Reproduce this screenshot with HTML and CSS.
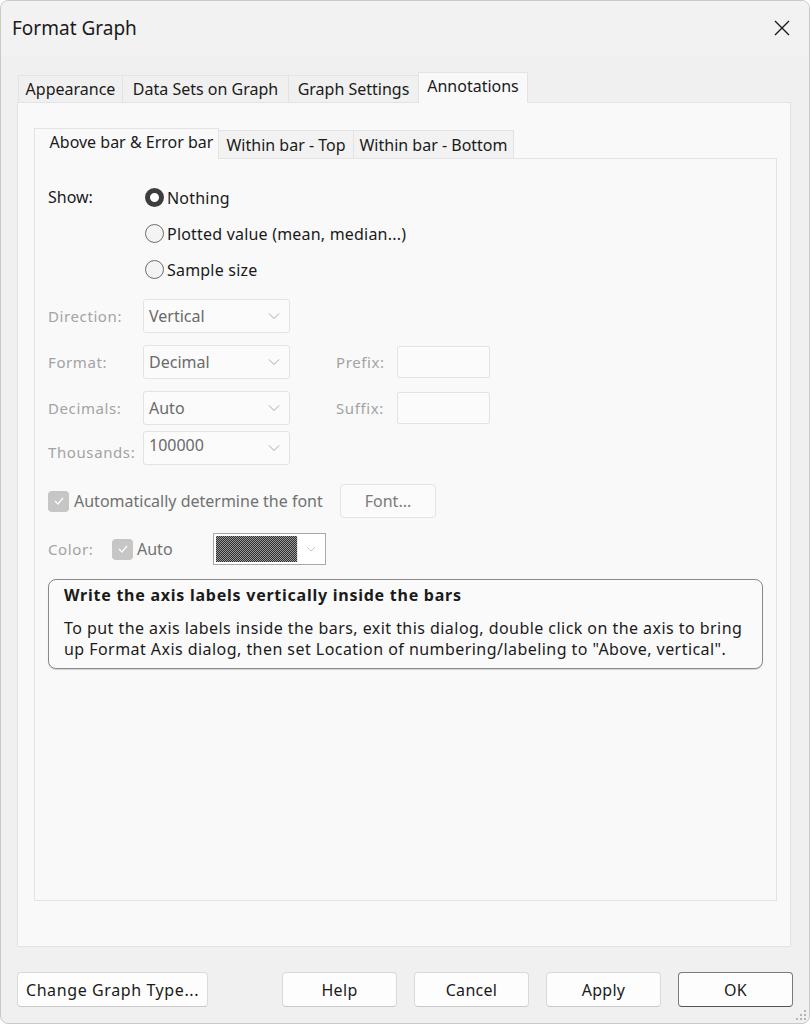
FILE: index.html
```html
<!DOCTYPE html>
<html>
<head>
<meta charset="utf-8">
<link rel="stylesheet" href="styles.css">
</head>
<body>
<div class="window">
  <div class="titlebar">
    <span class="title">Format Graph</span>
    <svg class="close" width="18" height="18" viewBox="0 0 18 18"><path d="M2 2L16 16M16 2L2 16" stroke="#1a1a1a" stroke-width="1.4" fill="none"/></svg>
  </div>

  <div class="tabs outer-tabs">
    <div class="tab t-app">Appearance</div>
    <div class="tab t-data">Data Sets on Graph</div>
    <div class="tab t-set">Graph Settings</div>
    <div class="tab active t-ann">Annotations</div>
  </div>

  <div class="outer-panel">
    <div class="tabs inner-tabs">
      <div class="tab active t-above">Above bar &amp; Error bar</div>
      <div class="tab t-top">Within bar - Top</div>
      <div class="tab t-bottom">Within bar - Bottom</div>
    </div>
    <div class="inner-panel">
      <div class="show-row">
        <div class="show-label">Show:</div>
        <div class="radios">
          <label class="radio"><span class="dot checked"></span>Nothing</label>
          <label class="radio"><span class="dot"></span>Plotted value (mean, median...)</label>
          <label class="radio"><span class="dot"></span>Sample size</label>
        </div>
      </div>

      <div class="fields">
        <div class="field-row">
          <span class="dlabel">Direction:</span>
          <div class="select"><span>Vertical</span><svg class="chev" width="12" height="8" viewBox="0 0 12 8"><path d="M1 1.5L6 6.5L11 1.5" stroke="#a8a8a8" fill="none" stroke-width="1"/></svg></div>
        </div>
        <div class="field-row">
          <span class="dlabel">Format:</span>
          <div class="select"><span>Decimal</span><svg class="chev" width="12" height="8" viewBox="0 0 12 8"><path d="M1 1.5L6 6.5L11 1.5" stroke="#a8a8a8" fill="none" stroke-width="1"/></svg></div>
          <span class="dlabel side">Prefix:</span>
          <div class="textbox"></div>
        </div>
        <div class="field-row">
          <span class="dlabel">Decimals:</span>
          <div class="select"><span>Auto</span><svg class="chev" width="12" height="8" viewBox="0 0 12 8"><path d="M1 1.5L6 6.5L11 1.5" stroke="#a8a8a8" fill="none" stroke-width="1"/></svg></div>
          <span class="dlabel side">Suffix:</span>
          <div class="textbox"></div>
        </div>
        <div class="field-row thousands">
          <span class="dlabel">Thousands:</span>
          <div class="select"><span class="up">100000</span><svg class="chev" width="12" height="8" viewBox="0 0 12 8"><path d="M1 1.5L6 6.5L11 1.5" stroke="#a8a8a8" fill="none" stroke-width="1"/></svg></div>
        </div>
      </div>

      <div class="font-row">
        <span class="check"><svg width="12" height="10" viewBox="0 0 12 10"><path d="M2 5L5 8L10 2" stroke="#fff" stroke-width="1.2" fill="none"/></svg></span>
        <span class="gtext">Automatically determine the font</span>
        <div class="btn-disabled">Font...</div>
      </div>

      <div class="color-row">
        <span class="dlabel">Color:</span>
        <span class="check"><svg width="12" height="10" viewBox="0 0 12 10"><path d="M2 5L5 8L10 2" stroke="#fff" stroke-width="1.2" fill="none"/></svg></span>
        <span class="gtext auto">Auto</span>
        <div class="swatch">
          <div class="pattern"></div>
          <div class="swatch-drop"><svg width="10" height="6" viewBox="0 0 10 6"><path d="M1 1L5 5L9 1" stroke="#c8c8c8" fill="none" stroke-width="1"/></svg></div>
        </div>
      </div>

      <div class="info">
        <div class="info-title">Write the axis labels vertically inside the bars</div>
        <div class="info-body">To put the axis labels inside the bars, exit this dialog, double click on the axis to bring<br>up Format Axis dialog, then set Location of numbering/labeling to "Above, vertical".</div>
      </div>
    </div>
  </div>

  <div class="footer">
    <div class="btn wide">Change Graph Type...</div>
    <div class="spacer"></div>
    <div class="btn">Help</div>
    <div class="btn">Cancel</div>
    <div class="btn">Apply</div>
    <div class="btn default">OK</div>
  </div>
  <svg class="grip" width="12" height="12" viewBox="0 0 12 12">
    <rect x="9" y="1" width="2" height="2" fill="#b5b5b5"/>
    <rect x="5" y="5" width="2" height="2" fill="#b5b5b5"/>
    <rect x="9" y="5" width="2" height="2" fill="#b5b5b5"/>
    <rect x="1" y="9" width="2" height="2" fill="#b5b5b5"/>
    <rect x="5" y="9" width="2" height="2" fill="#b5b5b5"/>
    <rect x="9" y="9" width="2" height="2" fill="#b5b5b5"/>
  </svg>
</div>
</body>
</html>
```

FILE: styles.css
```css
* { box-sizing: border-box; }
html, body { margin: 0; padding: 0; background: #ffffff; }
body {
  font-family: "Noto Sans", "Open Sans", sans-serif;
  font-size: 16px;
  color: #1a1a1a;
}
.window {
  position: relative;
  width: 810px;
  height: 1024px;
  background: #f0f0f0;
  border: 1px solid #c9c9c9;
  border-radius: 8px;
  display: flex;
  flex-direction: column;
  overflow: hidden;
}
.titlebar {
  height: 56px;
  display: flex;
  align-items: center;
  justify-content: space-between;
  padding: 0 18px 0 11px;
  background: #f2f2f2;
}
.title {
  font-size: 19px;
  margin-top: -2px;
}
.close { margin-top: -2px; }

.tabs {
  display: flex;
  align-items: flex-end;
}
.outer-tabs {
  height: 45px;
  padding-left: 17px;
}
.tab {
  height: 27px;
  border: 1px solid #e3e3e3;
  border-bottom: none;
  background: #f0f0f0;
  display: flex;
  align-items: center;
  justify-content: center;
  white-space: nowrap;
  margin-right: -1px;
}
.tab.active {
  height: 31px;
  background: #f9f9f9;
  position: relative;
  z-index: 1;
  margin-bottom: -1px;
  padding-bottom: 4px;
}
.t-app { width: 105px; }
.t-data { width: 167px; }
.t-set { width: 131px; }
.t-ann { width: 110px; }

.outer-panel {
  margin: 0 18px 0 16px;
  height: 845px;
  background: #f9f9f9;
  border: 1px solid #e3e3e3;
  padding: 24px 13px 0 16px;
  display: flex;
  flex-direction: column;
}
.inner-tabs {
  height: 31px;
}
.inner-tabs .tab { height: 28px; background: #f2f2f2; }
.inner-tabs .tab.active { height: 31px; background: #f9f9f9; padding: 0 0 4px 10px; }
.t-above { width: 185px; }
.t-top { width: 136px; }
.t-bottom { width: 161px; }

.inner-panel {
  height: 743px;
  border: 1px solid #e3e3e3;
  background: #f9f9f9;
  padding: 26px 14px 0 13px;
}

.show-row {
  display: flex;
}
.show-label { width: 97px; padding-top: 1px; }
.radios { display: flex; flex-direction: column; gap: 11px; }
.radio {
  display: flex;
  align-items: center;
  height: 25px;
  letter-spacing: 0.2px;
}
.dot {
  width: 19px;
  height: 19px;
  border-radius: 50%;
  border: 1px solid #6b6b6b;
  background: #f4f4f4;
  margin-right: 3px;
  flex: none;
}
.dot.checked {
  border: 5.5px solid #3d3d3d;
  background: #fff;
}

.fields {
  margin-top: 17px;
  display: flex;
  flex-direction: column;
  gap: 12px;
}
.field-row {
  display: flex;
  align-items: center;
  height: 34px;
}
.thousands { margin-top: -6px; }
.dlabel {
  color: #a3a3a3;
  font-size: 15px;
  letter-spacing: 0.6px;
  width: 95px;
  flex: none;
}
.thousands .dlabel { padding-top: 8px; }
.dlabel.side { width: 61px; margin-left: 46px; }
.select {
  width: 147px;
  height: 34px;
  border: 1px solid #e3e3e3;
  border-radius: 3px;
  background: #fbfbfb;
  display: flex;
  align-items: center;
  justify-content: space-between;
  padding: 0 9px 0 5px;
  color: #6a6a6a;
}
.select .up { margin-top: -6px; }
.textbox {
  width: 93px;
  height: 32px;
  border: 1px solid #e3e3e3;
  border-radius: 2px;
  background: #fbfbfb;
}

.font-row {
  display: flex;
  align-items: center;
  margin-top: 19px;
  height: 34px;
}
.check {
  width: 21px;
  height: 21px;
  border-radius: 4px;
  background: #c6c6c6;
  display: flex;
  align-items: center;
  justify-content: center;
  flex: none;
}
.gtext { color: #717171; margin-left: 5px; }
.font-row .gtext { width: 251px; }
.btn-disabled {
  margin-left: 15px;
  width: 96px;
  height: 34px;
  border: 1px solid #e3e3e3;
  border-radius: 4px;
  background: #fbfbfb;
  color: #7a7a7a;
  display: flex;
  align-items: center;
  justify-content: center;
}
.color-row {
  display: flex;
  align-items: center;
  margin-top: 15px;
  height: 32px;
}
.color-row .dlabel { width: 64px; }
.gtext.auto { margin-left: 4px; width: 76px; }
.swatch {
  width: 113px;
  height: 32px;
  border: 1px solid #a8a8a8;
  background: #fff;
  display: flex;
  padding: 2px;
}
.pattern {
  width: 81px;
  background: repeating-conic-gradient(#2e2e2e 0 25%, #9a9a9a 0 50%) 0 0 / 2px 2px;
}
.swatch-drop {
  flex: 1;
  display: flex;
  align-items: center;
  justify-content: center;
  border-left: 1px solid #e6e6e6;
}

.info {
  margin-top: 14px;
  width: 715px;
  height: 90px;
  border: 1px solid #8a8a8a;
  border-radius: 8px;
  background: #fafafa;
  box-shadow: 0 1px 1px rgba(0,0,0,0.15);
  padding: 4px 10px 0 15px;
}
.info-title {
  font-weight: bold;
  font-size: 16px;
  letter-spacing: 0.75px;
  height: 22px;
}
.info-body {
  margin-top: 12px;
  font-size: 16px;
  letter-spacing: 0.45px;
  line-height: 21px;
  white-space: nowrap;
}

.footer {
  display: flex;
  align-items: center;
  padding: 25px 16px 0 16px;
}
.spacer { flex: 1; }
.btn {
  width: 115px;
  height: 35px;
  border: 1px solid #dadada;
  border-bottom-color: #c9c9c9;
  border-radius: 4px;
  background: #fdfdfd;
  display: flex;
  align-items: center;
  justify-content: center;
  margin-left: 17px;
  letter-spacing: 0.3px;
}
.btn.wide { width: 191px; margin-left: 0; letter-spacing: 0.6px; }
.btn.default { border: 1px solid #7a7a7a; border-bottom-color: #555; }
.grip {
  position: absolute;
  right: 2px;
  bottom: 2px;
}
```
